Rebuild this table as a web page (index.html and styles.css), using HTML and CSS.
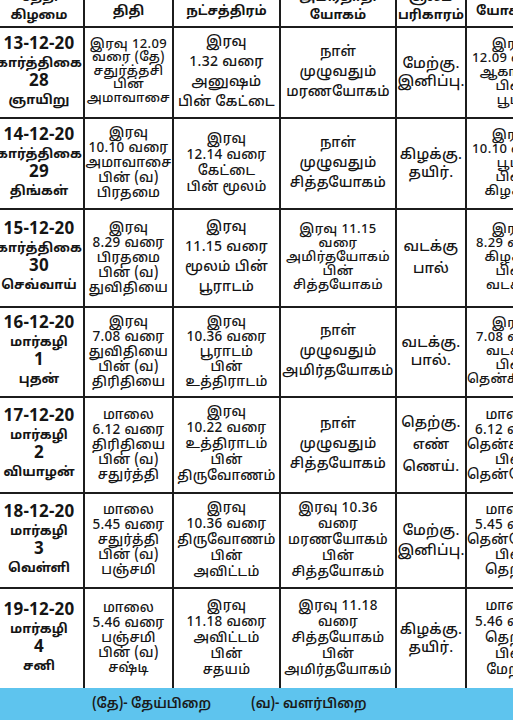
FILE: index.html
```html
<!DOCTYPE html>
<html lang="ta">
<head>
<meta charset="utf-8">
<title>பஞ்சாங்கம்</title>
<link rel="stylesheet" href="styles.css">
</head>
<body>
<div class="page">
  <div class="sheet">
    <table class="cal">
      <colgroup>
        <col class="c1"><col class="c2"><col class="c3"><col class="c4"><col class="c5"><col class="c6">
      </colgroup>
      <thead>
        <tr class="hd">
          <th>தேதி<br>கிழமை</th>
          <th class="one">திதி</th>
          <th class="one">நட்சத்திரம்</th>
          <th>அமிர்தாதி<br>யோகம்</th>
          <th>சூலம்<br>பரிகாரம்</th>
          <th class="one">யோகினி</th>
        </tr>
      </thead>
      <tbody>
        <tr class="r1">
          <td class="d"><span class="num">13-12-20</span><br>கார்த்திகை<br><span class="num">28</span><br>ஞாயிறு</td>
          <td class="l13">இரவு 12.09<br>வரை (தே)<br>சதுர்த்தசி<br>பின்<br>அமாவாசை</td>
          <td class="l20">இரவு<br>1.32 வரை<br>அனுஷம்<br>பின் கேட்டை</td>
          <td class="l20 dn">நாள்<br>முழுவதும்<br>மரணயோகம்</td>
          <td class="p l18">மேற்கு.<br>இனிப்பு.</td>
          <td class="l14">இரவு<br>12.09 வரை<br>ஆகாயம்<br>பின்<br>பூமி</td>
        </tr>
        <tr class="r2">
          <td class="d"><span class="num">14-12-20</span><br>கார்த்திகை<br><span class="num">29</span><br>திங்கள்</td>
          <td class="l15">இரவு<br>10.10 வரை<br>அமாவாசை<br>பின் (வ)<br>பிரதமை</td>
          <td class="l16">இரவு<br>12.14 வரை<br>கேட்டை<br>பின் மூலம்</td>
          <td class="l20">நாள்<br>முழுவதும்<br>சித்தயோகம்</td>
          <td class="p l18">கிழக்கு.<br>தயிர்.</td>
          <td class="l14">இரவு<br>10.10 வரை<br>பூமி<br>பின்<br>கிழக்கு</td>
        </tr>
        <tr class="r3">
          <td class="d"><span class="num">15-12-20</span><br>கார்த்திகை<br><span class="num">30</span><br>செவ்வாய்</td>
          <td class="l15">இரவு<br>8.29 வரை<br>பிரதமை<br>பின் (வ)<br>துவிதியை</td>
          <td class="l20">இரவு<br>11.15 வரை<br>மூலம் பின்<br>பூராடம்</td>
          <td class="l14">இரவு 11.15<br>வரை<br>அமிர்தயோகம்<br>பின்<br>சித்தயோகம்</td>
          <td class="p l22">வடக்கு<br>பால்</td>
          <td class="l14">இரவு<br>8.29 வரை<br>கிழக்கு<br>பின்<br>வடக்கு</td>
        </tr>
        <tr class="r4">
          <td class="d"><span class="num">16-12-20</span><br>மார்கழி<br><span class="num">1</span><br>புதன்</td>
          <td class="l15">இரவு<br>7.08 வரை<br>துவிதியை<br>பின் (வ)<br>திரிதியை</td>
          <td class="l15">இரவு<br>10.36 வரை<br>பூராடம்<br>பின்<br>உத்திராடம்</td>
          <td class="l20">நாள்<br>முழுவதும்<br>அமிர்தயோகம்</td>
          <td class="p l18">வடக்கு.<br>பால்.</td>
          <td class="l14">இரவு<br>7.08 வரை<br>வடக்கு<br>பின்<br>தென்கிழக்கு</td>
        </tr>
        <tr class="r5">
          <td class="d"><span class="num">17-12-20</span><br>மார்கழி<br><span class="num">2</span><br>வியாழன்</td>
          <td class="l15">மாலை<br>6.12 வரை<br>திரிதியை<br>பின் (வ)<br>சதுர்த்தி</td>
          <td class="l16">இரவு<br>10.22 வரை<br>உத்திராடம்<br>பின்<br>திருவோணம்</td>
          <td class="l20 up">நாள்<br>முழுவதும்<br>சித்தயோகம்</td>
          <td class="p l22">தெற்கு.<br>எண்<br>ணெய்.</td>
          <td class="l15">மாலை<br>6.12 வரை<br>தென்கிழக்கு<br>பின்<br>தென்மேற்கு</td>
        </tr>
        <tr class="r6">
          <td class="d"><span class="num">18-12-20</span><br>மார்கழி<br><span class="num">3</span><br>வெள்ளி</td>
          <td class="l15">மாலை<br>5.45 வரை<br>சதுர்த்தி<br>பின் (வ)<br>பஞ்சமி</td>
          <td class="l16">இரவு<br>10.36 வரை<br>திருவோணம்<br>பின்<br>அவிட்டம்</td>
          <td class="l16">இரவு 10.36<br>வரை<br>மரணயோகம்<br>பின்<br>சித்தயோகம்</td>
          <td class="p l20">மேற்கு.<br>இனிப்பு.</td>
          <td class="l15">மாலை<br>5.45 வரை<br>தென்மேற்கு<br>பின்<br>தெற்கு</td>
        </tr>
        <tr class="r7">
          <td class="d"><span class="num">19-12-20</span><br>மார்கழி<br><span class="num">4</span><br>சனி</td>
          <td class="l15">மாலை<br>5.46 வரை<br>பஞ்சமி<br>பின் (வ)<br>சஷ்டி</td>
          <td class="l16">இரவு<br>11.18 வரை<br>அவிட்டம்<br>பின்<br>சதயம்</td>
          <td class="l16">இரவு 11.18<br>வரை<br>சித்தயோகம்<br>பின்<br>அமிர்தயோகம்</td>
          <td class="p l18">கிழக்கு.<br>தயிர்.</td>
          <td class="l16">மாலை<br>5.46 வரை<br>தெற்கு<br>பின்<br>மேற்கு</td>
        </tr>
      </tbody>
    </table>
  </div>
  <div class="legend">
    <span>(தே)- தேய்பிறை</span>
    <span>(வ)- வளர்பிறை</span>
  </div>
</div>
</body>
</html>
```

FILE: styles.css
```css
html, body {
  margin: 0;
  padding: 0;
  background: #ffffff;
}

.page {
  width: 513px;
  height: 720px;
  overflow: hidden;
  display: flex;
  flex-direction: column;
  font-family: "Noto Sans Tamil", "Lohit Tamil", "Tamil MN", "Latha", "Noto Sans", "DejaVu Sans", sans-serif;
  color: #151515;
}

.sheet {
  height: 688px;
  overflow: hidden;
  flex: none;
}

.cal {
  border-collapse: collapse;
  table-layout: fixed;
  width: 562px;
  margin: -14px 0 0 -7px;
}

.c1 { width: 90px; }
.c2 { width: 89px; }
.c3 { width: 107px; }
.c4 { width: 116px; }
.c5 { width: 70px; }
.c6 { width: 90px; }

.cal th,
.cal td {
  border: 2px solid #1c1c1c;
  padding: 0;
  text-align: center;
  vertical-align: middle;
  overflow: hidden;
  white-space: nowrap;
}

.cal th {
  font-size: 13px;
  font-weight: 700;
  line-height: 18px;
}

.cal th.one {
  vertical-align: bottom;
  padding-bottom: 5px;
}

.hd { height: 40px; }
.r1 { height: 91px; }
.r2 { height: 91px; }
.r3 { height: 98px; }
.r4 { height: 90px; }
.r5 { height: 96px; }
.r6 { height: 95px; }
.r7 { height: 101px; }

.cal td {
  font-size: 13.5px;
  font-weight: 500;
  letter-spacing: 0.3px;
}

.cal td.d {
  font-size: 13px;
  font-weight: 700;
  line-height: 18px;
  letter-spacing: 0;
}

.cal td.d .num {
  font-size: 17px;
  letter-spacing: 0.2px;
}

.l13 { line-height: 13.5px; }
.l14 { line-height: 14px; }
.l15 { line-height: 15px; }
.l16 { line-height: 16px; }
.l18 { line-height: 18px; }
.l20 { line-height: 20px; }
.l22 { line-height: 22px; }

.cal td.l13,
.cal td.l14 {
  font-size: 13px;
  letter-spacing: 0.4px;
}

.cal td.l20 {
  font-size: 14px;
}

.cal td.p {
  font-size: 14.5px;
  letter-spacing: 0.2px;
}

.dn { padding-top: 8px; }
.up { padding-bottom: 8px; }

.legend {
  flex: none;
  height: 32px;
  background: #5ec4ee;
  display: flex;
  align-items: center;
  justify-content: flex-start;
  gap: 40px;
  padding-left: 92px;
  font-size: 13.5px;
  font-weight: 600;
  color: #1a1a1a;
}
```
